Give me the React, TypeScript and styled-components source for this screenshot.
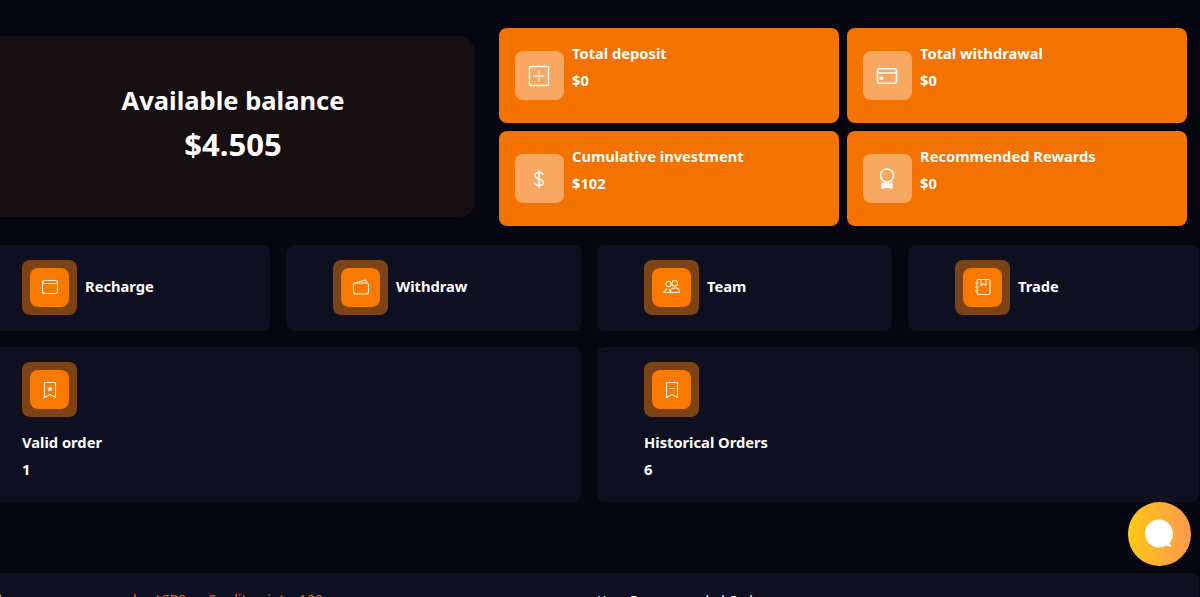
import React from "react";
import styled, { createGlobalStyle } from "styled-components";

const Global = createGlobalStyle`
  html, body { margin: 0; padding: 0; height: 100%; background: #05060f; overflow: hidden; }
  body { font-family: "Noto Sans", "Open Sans", sans-serif; color: #fff; }
`;

const Viewport = styled.div`
  height: 597px;
  overflow: hidden;
  position: relative;
  background: #05060f;
`;

const Page = styled.div`
  width: 1224px;
  margin-left: -25px;
  padding-top: 28px;
  display: flex;
  flex-direction: column;
`;

const Top = styled.section`
  display: flex;
  align-items: flex-start;
  gap: 24px;
  margin-bottom: 19px;
`;

const Balance = styled.div`
  width: 500px;
  height: 181px;
  margin-top: 8px;
  border-radius: 16px;
  background: #160e10;
  display: flex;
  flex-direction: column;
  align-items: center;
  justify-content: center;
  padding: 0 0 6px 16px;
  box-sizing: border-box;
`;

const BalanceLabel = styled.div`
  font-size: 25.5px;
  font-weight: 700;
  line-height: 40px;
`;

const BalanceValue = styled.div`
  font-size: 31px;
  font-weight: 700;
  line-height: 48px;
`;

const StatGrid = styled.div`
  display: grid;
  grid-template-columns: 340px 340px;
  gap: 8px;
`;

const StatCard = styled.div`
  height: 95px;
  box-sizing: border-box;
  background: #f47300;
  border-radius: 8px;
  display: flex;
  align-items: center;
  gap: 8px;
  padding: 0 15.5px;
`;

const StatIcon = styled.div`
  width: 49.5px;
  height: 49px;
  border-radius: 8px;
  background: rgba(255, 255, 255, 0.38);
  display: flex;
  align-items: center;
  justify-content: center;
  flex: none;
`;

const StatText = styled.div`
  display: flex;
  flex-direction: column;
  gap: 3px;
  margin-bottom: 18px;
`;

const Label = styled.div`
  font-size: 14.7px;
  font-weight: 700;
  line-height: 24px;
`;

const ActionRow = styled.section`
  display: grid;
  grid-template-columns: 295px 295px 295px 1fr;
  gap: 16px;
  margin-bottom: 16px;
`;

const ActionCard = styled.div`
  height: 86px;
  box-sizing: border-box;
  background: #0e0f20;
  border-radius: 8px;
  display: flex;
  align-items: center;
  gap: 8px;
  padding: 0 0 2px 47px;
`;

const ActionLabel = styled(Label)`
  margin-bottom: 3px;
`;

const IconFrame = styled.div`
  width: 55px;
  height: 55px;
  padding: 8px;
  box-sizing: border-box;
  border-radius: 8px;
  background: #7c4314;
  flex: none;
`;

const IconCore = styled.div`
  width: 100%;
  height: 100%;
  border-radius: 8px;
  background: #fa7a00;
  display: flex;
  align-items: center;
  justify-content: center;
`;

const OrderRow = styled.section`
  display: grid;
  grid-template-columns: 606px 1fr;
  gap: 16px;
`;

const OrderCard = styled.div`
  height: 155px;
  box-sizing: border-box;
  background: #0e0f20;
  border-radius: 8px;
  padding: 15px 47px;
  display: flex;
  flex-direction: column;
`;

const OrderTitle = styled(Label)`
  margin-top: 13px;
  margin-bottom: 3px;
`;

const Footer = styled.section`
  margin-top: 71px;
  height: 120px;
  background: #0e0f20;
  border-radius: 8px;
  padding: 15px 0 0 18px;
  box-sizing: border-box;
  display: grid;
  grid-template-columns: 605px 1fr;
  font-size: 14px;
  line-height: 24px;
`;

const MemberLine = styled.div`
  display: flex;
  white-space: nowrap;
`;

const Accent = styled.span<{ $gap: number }>`
  color: #f4610a;
  margin-left: ${(p) => p.$gap}px;
`;

const CodeLine = styled.div`
  font-size: 13.3px;
`;

const Chat = styled.div`
  position: absolute;
  left: 1127.5px;
  top: 502px;
  width: 63.5px;
  height: 64px;
  border-radius: 50%;
  background: linear-gradient(90deg, #fdc915, #fe984f);
  display: flex;
  align-items: center;
  justify-content: center;
`;

const I = ({ children }: { children: React.ReactNode }) => (
  <svg width="24" height="24" viewBox="0 0 24 24" fill="none" stroke="#fff" strokeWidth="1.4" strokeLinecap="round" strokeLinejoin="round">
    {children}
  </svg>
);

const Small = ({ children }: { children: React.ReactNode }) => (
  <svg width="20" height="20" viewBox="0 0 20 20" fill="none" stroke="#fff" strokeWidth="1.1" strokeLinecap="round" strokeLinejoin="round" opacity="0.9">
    {children}
  </svg>
);

const stats = [
  {
    t: "Total deposit", v: "$0",
    i: <I><rect x="2.500" y="2.500" width="19" height="19" rx="1.500" /><path d="M12 7v10M7 12h10" strokeWidth="1" /></I>,
  },
  {
    t: "Total withdrawal", v: "$0",
    i: <I><rect x="2.500" y="4.800" width="19" height="14.500" rx="2" strokeWidth="1.500" /><path d="M2.500 9h19" strokeWidth="1.700" /><rect x="5" y="13" width="3" height="2.500" fill="#fff" strokeWidth="0.500" /></I>,
  },
  {
    t: "Cumulative investment", v: "$102",
    i: <svg width="24" height="24" viewBox="0 0 24 24" fill="none" stroke="#fff" strokeWidth="1.500" strokeLinecap="round"><path d="M12 3.500v17M16 7.500c-.6-1.300-2-2-4-2-2.400 0-4 1.200-4 3 0 4.500 8.200 2.500 8.200 7 0 1.900-1.700 3-4.200 3-2.200 0-3.700-.8-4.300-2.300" /></svg>,
  },
  {
    t: "Recommended Rewards", v: "$0",
    i: <I><circle cx="12" cy="8.500" r="6.500" strokeWidth="1.500" strokeDasharray="3.600 0.400" /><path d="M7 16l5 1.300 5-1.300v5l-5-1.300-5 1.300z" fill="#fff" /></I>,
  },
];

const actions = [
  { t: "Recharge", i: <Small><rect x="2.500" y="3.500" width="15" height="13" rx="2" /><path d="M2.500 6.500h15" /></Small> },
  { t: "Withdraw", i: <Small><rect x="2.500" y="6" width="15" height="11" rx="2" /><path d="M4 6l10.500-3 1 3" /></Small> },
  { t: "Team", i: <Small><circle cx="6.500" cy="7" r="2.600" /><circle cx="12.800" cy="6.300" r="2.800" /><path d="M1.800 15.500l3-3.800M7.200 12.500l2.300 3H1.800" /><path d="M8 15.500c0-2.800 2-4.500 4.800-4.500s4.700 1.700 4.700 4.500z" /></Small> },
  { t: "Trade", i: <Small><rect x="4" y="2.500" width="13" height="15" rx="1.500" /><path d="M8 2.500v6l2.500-1.700 2.500 1.700v-6M2.500 6h2.500M2.500 10h2.500M2.500 14h2.500" /></Small> },
];

const orders = [
  { t: "Valid order", v: "1", i: <Small><path d="M4.500 2.500h11v15l-5.500-3-5.500 3z" /><path d="M10 6l.9 1.800 2 .3-1.450 1.400.35 2-1.800-.95-1.800.95.350-2-1.450-1.400 2-.3z" fill="#fff" stroke="none" /></Small> },
  { t: "Historical Orders", v: "6", i: <Small><path d="M4.500 2.500h11v15l-5.500-3-5.500 3z" /><path d="M7.800 8.500h4.400" /></Small> },
];

export default function App() {
  return (
    <Viewport>
      <Global />
      <Page>
        <Top>
          <Balance>
            <BalanceLabel>Available balance</BalanceLabel>
            <BalanceValue>$4.505</BalanceValue>
          </Balance>
          <StatGrid>
            {stats.map((s) => (
              <StatCard key={s.t}>
                <StatIcon>{s.i}</StatIcon>
                <StatText>
                  <Label>{s.t}</Label>
                  <Label>{s.v}</Label>
                </StatText>
              </StatCard>
            ))}
          </StatGrid>
        </Top>
        <ActionRow>
          {actions.map((a) => (
            <ActionCard key={a.t}>
              <IconFrame><IconCore>{a.i}</IconCore></IconFrame>
              <ActionLabel>{a.t}</ActionLabel>
            </ActionCard>
          ))}
        </ActionRow>
        <OrderRow>
          {orders.map((o) => (
            <OrderCard key={o.t}>
              <IconFrame><IconCore>{o.i}</IconCore></IconFrame>
              <OrderTitle>{o.t}</OrderTitle>
              <Label>{o.v}</Label>
            </OrderCard>
          ))}
        </OrderRow>
        <Footer>
          <MemberLine>
            <span>Your</span>
            <Accent $gap={96}>role:</Accent>
            <Accent $gap={8}>VIP0</Accent>
            <Accent $gap={21}>Credit points: 100</Accent>
          </MemberLine>
          <CodeLine>Your Recommended Code</CodeLine>
        </Footer>
      </Page>
      <Chat>
        <svg width="34" height="34" viewBox="0 0 34 34"><path d="M17 2.500C9.300 2.500 3 8.800 3 16.500S9.300 30.500 17 30.500c2.600 0 5-.7 7.100-1.900 1.800 1 3.700 1.200 5.900.6-1.300-1-2.100-2-2.400-3.300 2-2.400 3.400-6 3.400-9.400C31 8.800 24.700 2.500 17 2.500z" fill="#fff" /></svg>
      </Chat>
    </Viewport>
  );
}
